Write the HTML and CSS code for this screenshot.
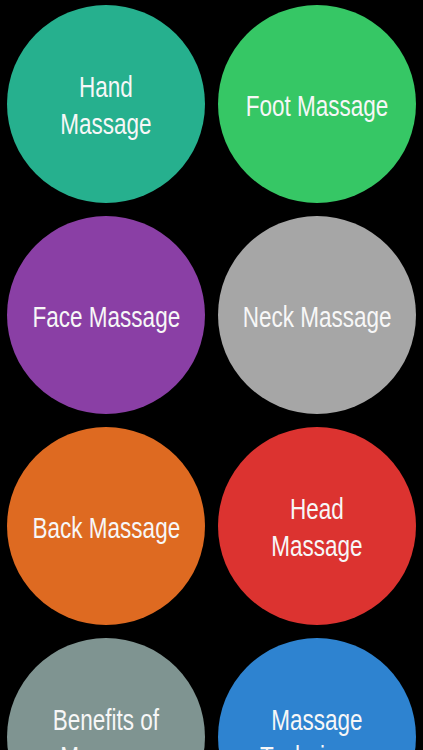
FILE: index.html
```html
<!DOCTYPE html>
<html lang="en">
<head>
    <meta charset="UTF-8">
    <meta name="viewport" content="width=device-width, initial-scale=1.0">
    <title>Massage</title>
    <link rel="stylesheet" href="styles.css">
</head>
<body>
    <div class="grid">
        <div class="circle hand"><span>Hand<br>Massage</span></div>
        <div class="circle foot"><span>Foot Massage</span></div>
        <div class="circle face"><span>Face Massage</span></div>
        <div class="circle neck"><span>Neck Massage</span></div>
        <div class="circle back"><span>Back Massage</span></div>
        <div class="circle head"><span>Head<br>Massage</span></div>
        <div class="circle benefits"><span>Benefits of<br>Massage</span></div>
        <div class="circle techniques"><span>Massage<br>Techniques</span></div>
    </div>
</body>
</html>
```

FILE: styles.css
```css
* {
    margin: 0;
    padding: 0;
    box-sizing: border-box;
}

body {
    background: #000;
    font-family: 'Liberation Sans', Arial, sans-serif;
    color: #f7f7f7;
    overflow: hidden;
}

.grid {
    display: grid;
    grid-template-columns: repeat(2, 198px);
    gap: 13px;
    padding: 5px 7px;
}

.circle {
    width: 198px;
    height: 198px;
    border-radius: 50%;
    display: flex;
    align-items: center;
    justify-content: center;
    text-align: center;
    font-size: 30px;
    line-height: 37px;
}

/* the reference font is a condensed one, squeeze the text to match */
.circle span {
    display: inline-block;
    white-space: nowrap;
    transform: scaleX(0.75);
    margin-top: 2px;
}

.hand { background: #26b08e; }
.foot { background: #36c765; }
.face { background: #8a3fa5; }
.neck { background: #a6a6a6; }
.back { background: #de6a21; }
.head { background: #dc3330; }
.benefits { background: #7f9491; }
.techniques { background: #2e83d0; }
```
